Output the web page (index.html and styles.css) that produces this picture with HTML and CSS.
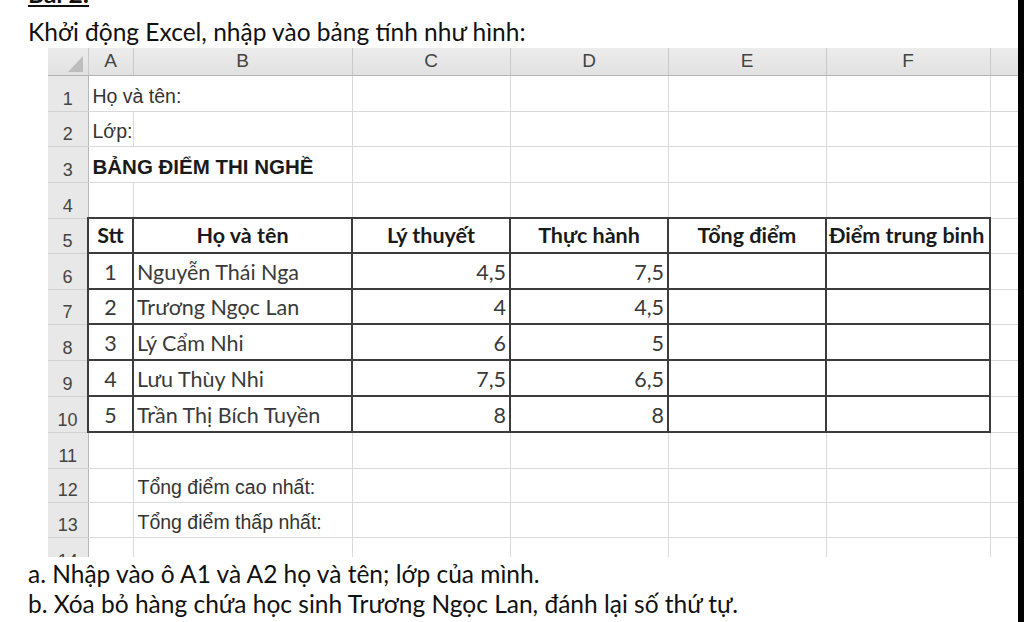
FILE: index.html
```html
<!DOCTYPE html>
<html lang="vi">
<head>
<meta charset="utf-8">
<title>Bài 2</title>
<link rel="stylesheet" href="styles.css">
</head>
<body>
<div class="page">
  <div class="sheet">
    <p class="bai">Bài 2:</p>
    <p class="intro">Khởi động Excel, nhập vào bảng tính như hình:</p>
    <div class="grid-wrap">
      <table class="xl">
        <colgroup>
          <col class="c-rh"><col class="c-a"><col class="c-b"><col class="c-c"><col class="c-d"><col class="c-e"><col class="c-f"><col class="c-g">
        </colgroup>
        <tr class="hdr">
          <th class="corner"><svg class="tri" width="15" height="16" viewBox="0 0 15 16"><polygon points="15,0 15,16 0,16" fill="#bdbdbd"/></svg></th>
          <th>A</th><th>B</th><th>C</th><th>D</th><th>E</th><th>F</th><th></th>
        </tr>
        <tr class="h36">
          <th class="rh">1</th><td class="ar nob">Họ và tên:</td><td></td><td></td><td></td><td></td><td></td><td></td>
        </tr>
        <tr class="h35">
          <th class="rh">2</th><td class="ar">Lớp:</td><td></td><td></td><td></td><td></td><td></td><td></td>
        </tr>
        <tr class="h36">
          <th class="rh">3</th><td class="ar bold nob">BẢNG ĐIỂM THI NGHỀ</td><td></td><td></td><td></td><td></td><td></td><td></td>
        </tr>
        <tr class="h36">
          <th class="rh">4</th><td></td><td></td><td></td><td></td><td></td><td></td><td></td>
        </tr>
        <tr class="h35">
          <th class="rh">5</th><td class="t th-c">Stt</td><td class="t th-c">Họ và tên</td><td class="t th-c">Lý thuyết</td><td class="t th-c">Thực hành</td><td class="t th-c">Tổng điểm</td><td class="t th-c th-f">Điểm trung binh</td><td></td>
        </tr>
        <tr class="h36">
          <th class="rh">6</th><td class="t ctr">1</td><td class="t lft">Nguyễn Thái Nga</td><td class="t num">4,5</td><td class="t num">7,5</td><td class="t"></td><td class="t"></td><td></td>
        </tr>
        <tr class="h35">
          <th class="rh">7</th><td class="t ctr">2</td><td class="t lft">Trương Ngọc Lan</td><td class="t num">4</td><td class="t num">4,5</td><td class="t"></td><td class="t"></td><td></td>
        </tr>
        <tr class="h36">
          <th class="rh">8</th><td class="t ctr">3</td><td class="t lft">Lý Cẩm Nhi</td><td class="t num">6</td><td class="t num">5</td><td class="t"></td><td class="t"></td><td></td>
        </tr>
        <tr class="h36">
          <th class="rh">9</th><td class="t ctr">4</td><td class="t lft">Lưu Thùy Nhi</td><td class="t num">7,5</td><td class="t num">6,5</td><td class="t"></td><td class="t"></td><td></td>
        </tr>
        <tr class="h36">
          <th class="rh">10</th><td class="t ctr">5</td><td class="t lft">Trần Thị Bích Tuyền</td><td class="t num">8</td><td class="t num">8</td><td class="t"></td><td class="t"></td><td></td>
        </tr>
        <tr class="h36">
          <th class="rh">11</th><td></td><td></td><td></td><td></td><td></td><td></td><td></td>
        </tr>
        <tr class="h34">
          <th class="rh">12</th><td></td><td class="ar">Tổng điểm cao nhất:</td><td></td><td></td><td></td><td></td><td></td>
        </tr>
        <tr class="h35">
          <th class="rh">13</th><td></td><td class="ar">Tổng điểm thấp nhất:</td><td></td><td></td><td></td><td></td><td></td>
        </tr>
        <tr class="h36">
          <th class="rh">14</th><td></td><td></td><td></td><td></td><td></td><td></td><td></td>
        </tr>
      </table>
    </div>
    <p class="q q-a">a. Nhập vào ô A1 và A2 họ và tên; lớp của mình.</p>
    <p class="q">b. Xóa bỏ hàng chứa học sinh Trương Ngọc Lan, đánh lại số thứ tự.</p>
  </div>
  <div class="edge"></div>
</div>
</body>
</html>
```

FILE: styles.css
```css
* { box-sizing: border-box; }
html, body { margin: 0; padding: 0; }
body {
  width: 1024px;
  height: 622px;
  overflow: hidden;
  background: #fff;
  color: #111;
  font-family: Lato, "Noto Sans", sans-serif;
}
.page { display: flex; height: 622px; }
.sheet { width: 1018px; overflow: hidden; }
.edge { flex: 1; background: #000; }

.bai {
  margin: -20px 0 0 28px;
  font: bold 24.5px/28px Lato, "Noto Sans", sans-serif;
  text-decoration: underline;
  color: #111;
}
.intro {
  margin: 10px 0 0 28px;
  font: 24.5px/28px Lato, "Noto Sans", sans-serif;
  color: #111;
}
.grid-wrap {
  margin: 2px 0 0 48px;
  height: 509px;
  overflow: hidden;
}
.q {
  margin: 0 0 0 28px;
  font: 24.5px/30px Lato, "Noto Sans", sans-serif;
  color: #111;
  white-space: nowrap;
}
.q-a { margin-top: 2px; }

/* spreadsheet */
.xl {
  table-layout: fixed;
  border-collapse: collapse;
  width: 970px;
  font-family: Lato, "Noto Sans", sans-serif;
  font-size: 21.5px;
  color: #3a3a3a;
}
.c-rh { width: 40px; }
.c-a { width: 45px; }
.c-b { width: 219px; }
.c-c { width: 158px; }
.c-d { width: 158px; }
.c-e { width: 158px; }
.c-f { width: 164px; }
.c-g { width: 28px; }

.hdr { height: 27px; }
.h34 { height: 34px; }
.h35 { height: 35px; }
.h36 { height: 36px; }

.xl td {
  border: 1px solid #dadada;
  padding: 0 0 4px 0;
  vertical-align: bottom;
  line-height: 24px;
  white-space: nowrap;
  overflow: visible;
}
.hdr th {
  background: linear-gradient(#ececec, #e1e1e1);
  border-top: none;
  border-right: 1px solid #c9c9c9;
  border-bottom: 1px solid #b3b3b3;
  font: 19px/22px "Liberation Sans", Arial, sans-serif;
  color: #444;
  font-weight: normal;
  text-align: center;
  vertical-align: middle;
  padding: 0;
}
.hdr .corner {
  vertical-align: bottom;
  padding: 0 5px 3px 0;
  border-left: none;
}
.tri { display: block; margin-left: auto; }

.rh {
  background: #e8e8e8;
  border-left: none;
  border-right: 1px solid #b8b8b8;
  border-bottom: 1px solid #d2d2d2;
  font: 18px/20px "Liberation Sans", Arial, sans-serif;
  color: #444;
  font-weight: normal;
  text-align: center;
  vertical-align: bottom;
  padding: 0 0 2px 0;
}

.xl td.ar {
  font: 19.5px/22px "Liberation Sans", Arial, sans-serif;
  color: #333;
  padding: 0 0 4px 4px;
}
.xl td.bold { font-weight: bold; font-size: 20.5px; color: #1a1a1a; }
.xl td.nob { border-right-style: hidden; }

.xl td.t { border: 2px solid #3c3c3c; }
.xl td.th-c {
  font-weight: bold;
  color: #1a1a1a;
  text-align: center;
  padding-bottom: 5px;
}
.xl td.th-f { text-align: left; padding-left: 2px; }
.xl td.ctr { text-align: center; }
.xl td.lft { padding-left: 3px; }
.xl td.num { text-align: right; padding-right: 3px; }
```
